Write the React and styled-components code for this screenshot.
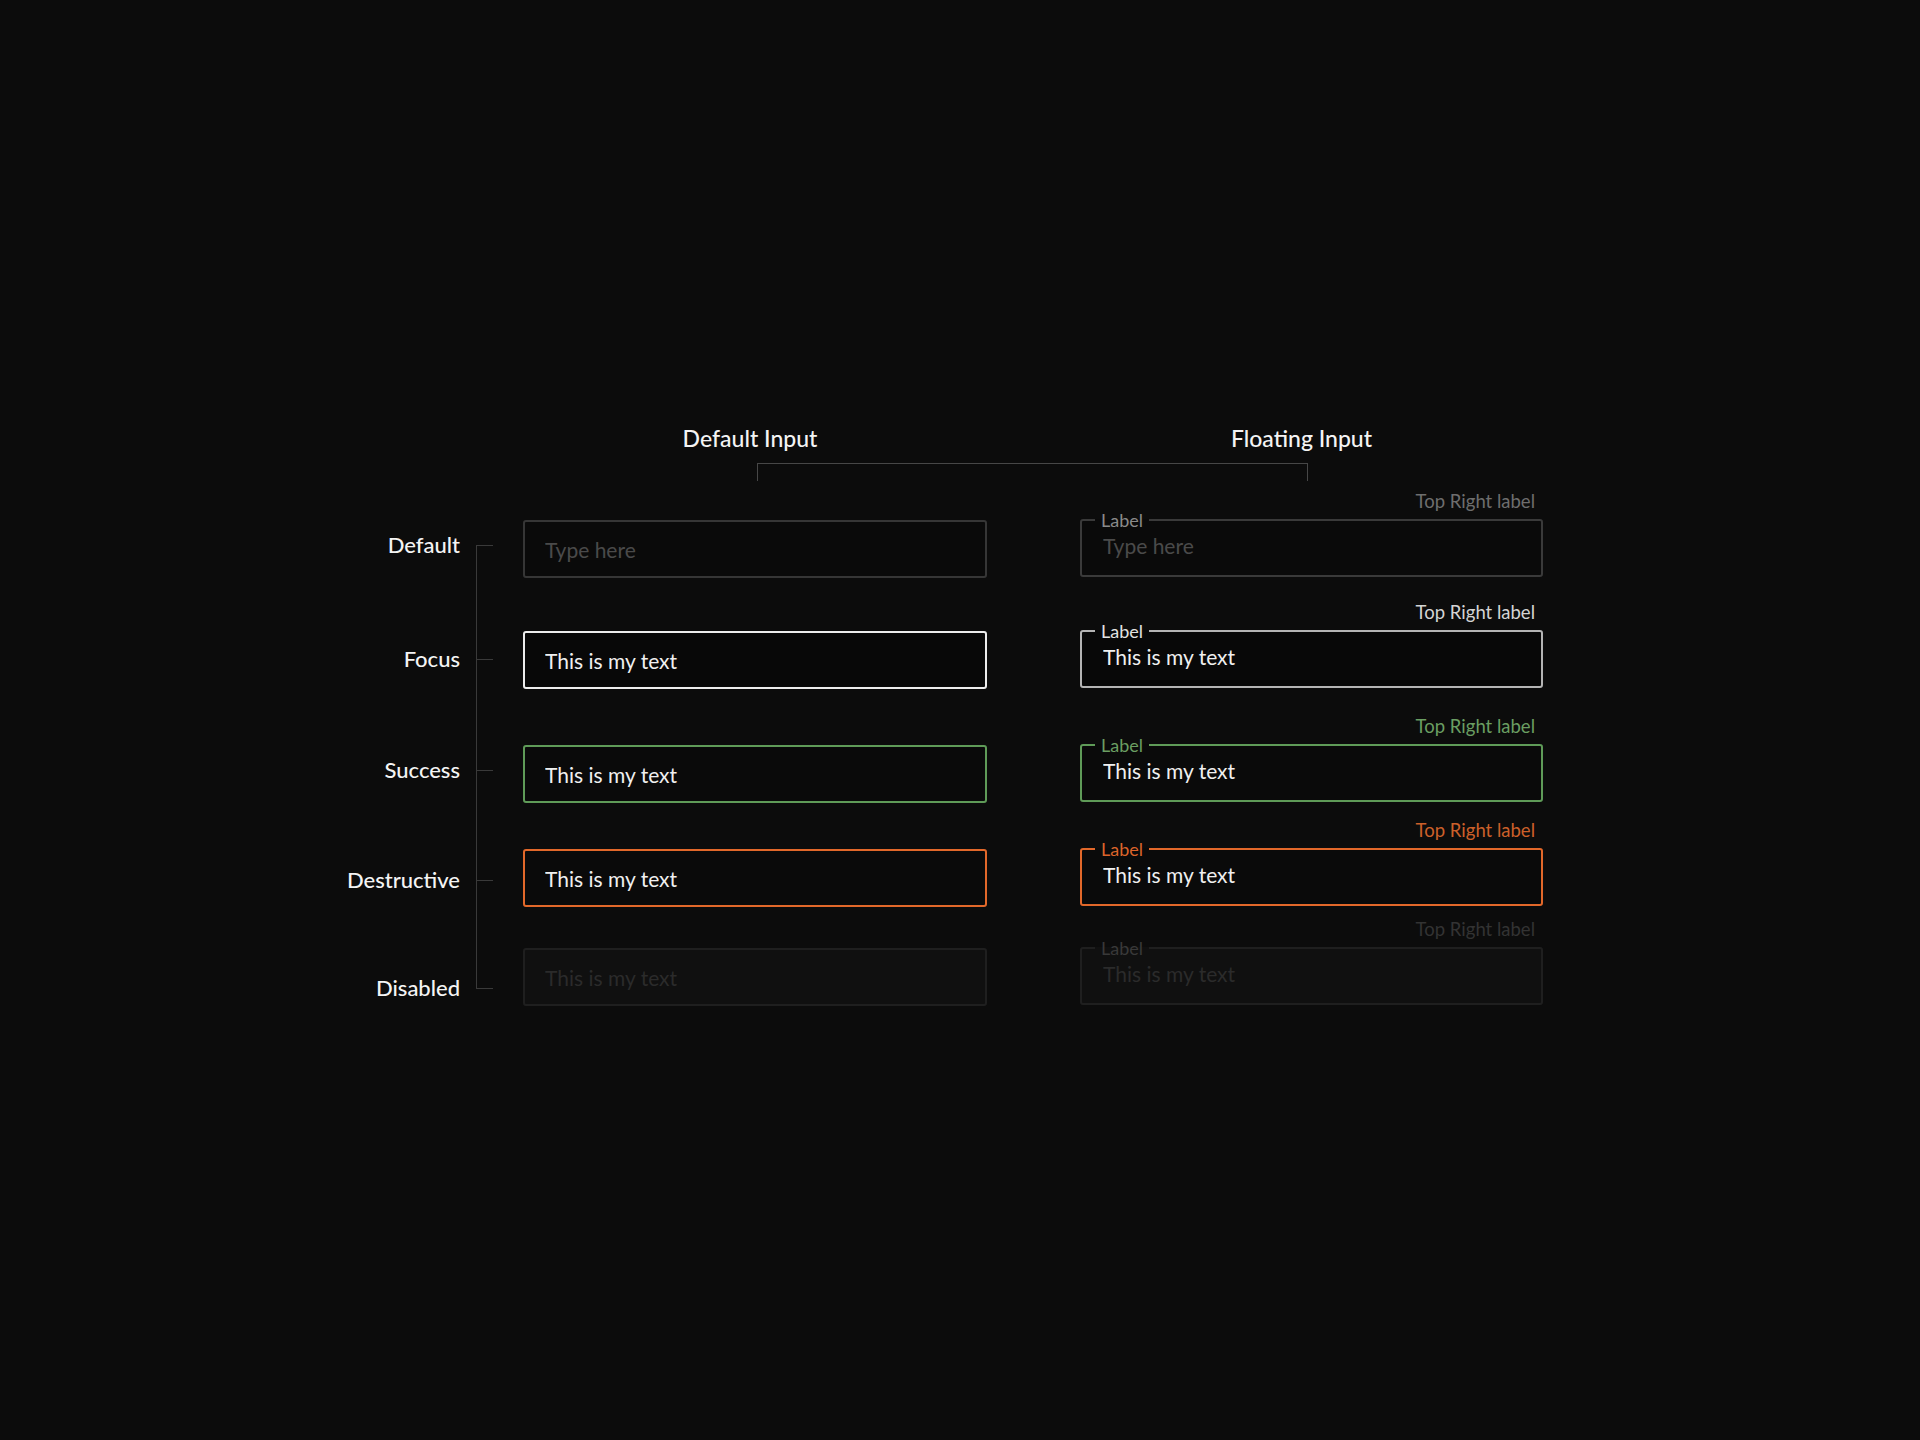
import React from 'react';
import styled, { createGlobalStyle } from 'styled-components';

const GlobalStyle = createGlobalStyle`
  html, body {
    margin: 0;
    padding: 0;
    background: #0c0c0c;
  }
  body {
    font-family: Lato, "Noto Sans", sans-serif;
    color: #f2f2f2;
  }
`;

const COLUMNS = '176px 47px 464px 93px 463px';

const tones = {
  default: {
    border: '#363636',
    floatBorder: '#3a3a3a',
    text: '#4a4a4a',
    label: '#8a8a8a',
    corner: '#6e6e6e',
    bg: '#0a0a0a',
  },
  focus: {
    border: '#ececec',
    floatBorder: '#b4b4b4',
    text: '#f0f0f0',
    label: '#e2e2e2',
    corner: '#d4d4d4',
    bg: '#080808',
  },
  success: {
    border: '#5f9b58',
    floatBorder: '#5f9b58',
    text: '#f0f0f0',
    label: '#6a9e62',
    corner: '#6a9e62',
    bg: '#0a0a0a',
  },
  destructive: {
    border: '#e2682a',
    floatBorder: '#e2682a',
    text: '#f0f0f0',
    label: '#dc642b',
    corner: '#cc602a',
    bg: '#0a0a0a',
  },
  disabled: {
    border: '#1f1f1f',
    floatBorder: '#1f1f1f',
    text: '#2b2b2b',
    label: '#393939',
    corner: '#333333',
    bg: '#101010',
  },
};

const Page = styled.main`
  min-height: 1440px;
  box-sizing: border-box;
  padding: 425px 0 0 300px;
`;

const Board = styled.div`
  width: 1243px;
`;

const HeaderRow = styled.div`
  display: grid;
  grid-template-columns: ${COLUMNS};
`;

const Heading = styled.h2`
  grid-column: ${(p) => p.$col};
  margin: 0;
  font-size: 23px;
  line-height: 26px;
  font-weight: 500;
  color: #f4f4f4;
  text-align: center;
  transform: translateX(${(p) => p.$shift || 0}px);
`;

const Bracket = styled.div`
  grid-column: 3 / 6;
  height: 17px;
  margin: 12px 235px 0 234px;
  border: 1px solid #474747;
  border-bottom: none;
`;

const Rows = styled.div`
  margin-top: 10px;
`;

const Row = styled.div`
  display: grid;
  grid-template-columns: ${COLUMNS};
  grid-template-rows: ${(p) => p.$space}px auto;
`;

const RowLabel = styled.div`
  grid-column: 1;
  grid-row: 2;
  display: flex;
  flex-direction: column;
  justify-content: flex-end;
  padding: 0 16px ${(p) => p.$anchor - 13}px 0;
  font-size: 22px;
  line-height: 26px;
  font-weight: 500;
  text-align: right;
  color: #f4f4f4;
`;

const Tree = styled.div`
  grid-column: 2;
  grid-row: 1 / 3;
  display: flex;
  flex-direction: column;
`;

const TreeUp = styled.div`
  flex: 1;
  border-left: 1px solid ${(p) => (p.$hidden ? 'transparent' : '#3a3a3a')};
`;

const TreeTick = styled.div`
  width: 17px;
  height: 1px;
  background: #3a3a3a;
`;

const TreeDown = styled.div`
  height: ${(p) => p.$anchor - 1}px;
  border-left: 1px solid ${(p) => (p.$hidden ? 'transparent' : '#3a3a3a')};
`;

const PlainInput = styled.input`
  grid-column: 3;
  grid-row: 2;
  align-self: end;
  width: 100%;
  height: 58px;
  box-sizing: border-box;
  margin: 0;
  padding: 0 20px;
  border: 2px solid ${(p) => tones[p.$tone].border};
  border-radius: 3px;
  background: ${(p) => tones[p.$tone].bg};
  color: ${(p) => tones[p.$tone].text};
  font-family: Lato, "Noto Sans", sans-serif;
  font-size: 21px;
  outline: none;

  &::placeholder {
    color: ${(p) => tones[p.$tone].text};
  }
`;

const FloatField = styled.div`
  grid-column: 5;
  grid-row: 2;
  align-self: end;
  display: flex;
  flex-direction: column;
  margin-bottom: 1px;
`;

const CornerLabel = styled.span`
  padding-right: 8px;
  font-size: 18.5px;
  line-height: 20px;
  text-align: right;
  color: ${(p) => tones[p.$tone].corner};
`;

const FloatBox = styled.fieldset`
  margin: 0;
  min-width: 0;
  padding: 0 20px 14px 13px;
  border: 2px solid ${(p) => tones[p.$tone].floatBorder};
  border-radius: 3px;
  background: ${(p) => tones[p.$tone].bg};
`;

const FloatLegend = styled.legend`
  padding: 0 6px;
  font-size: 18px;
  line-height: 18px;
  color: ${(p) => tones[p.$tone].label};
`;

const FloatInput = styled.input`
  display: block;
  width: 100%;
  height: 32px;
  box-sizing: border-box;
  margin: 0;
  padding: 0 0 0 8px;
  border: none;
  background: transparent;
  color: ${(p) => tones[p.$tone].text};
  font-family: Lato, "Noto Sans", sans-serif;
  font-size: 21px;
  outline: none;

  &::placeholder {
    color: ${(p) => tones[p.$tone].text};
  }
`;

const states = [
  { tone: 'default', name: 'Default', space: 0, anchor: 33, empty: true },
  { tone: 'focus', name: 'Focus', space: 24, anchor: 30 },
  { tone: 'success', name: 'Success', space: 27, anchor: 33 },
  { tone: 'destructive', name: 'Destructive', space: 17, anchor: 27 },
  { tone: 'disabled', name: 'Disabled', space: 12, anchor: 18 },
];

const App = () => {
  return (
    <>
      <GlobalStyle />
      <Page>
        <Board>
          <HeaderRow>
            <Heading $col={3} $shift={-5}>Default Input</Heading>
            <Heading $col={5} $shift={-10}>Floating Input</Heading>
            <Bracket />
          </HeaderRow>

          <Rows>
            {states.map((s, i) => (
              <Row key={s.tone} $space={s.space}>
                <RowLabel $anchor={s.anchor}>{s.name}</RowLabel>
                <Tree>
                  <TreeUp $hidden={i === 0} />
                  <TreeTick />
                  <TreeDown $anchor={s.anchor} $hidden={i === states.length - 1} />
                </Tree>
                <PlainInput
                  $tone={s.tone}
                  readOnly
                  disabled={s.tone === 'disabled'}
                  placeholder="Type here"
                  defaultValue={s.empty ? '' : 'This is my text'}
                />
                <FloatField>
                  <CornerLabel $tone={s.tone}>Top Right label</CornerLabel>
                  <FloatBox $tone={s.tone}>
                    <FloatLegend $tone={s.tone}>Label</FloatLegend>
                    <FloatInput
                      $tone={s.tone}
                      readOnly
                      disabled={s.tone === 'disabled'}
                      placeholder="Type here"
                      defaultValue={s.empty ? '' : 'This is my text'}
                    />
                  </FloatBox>
                </FloatField>
              </Row>
            ))}
          </Rows>
        </Board>
      </Page>
    </>
  );
};

export default App;
